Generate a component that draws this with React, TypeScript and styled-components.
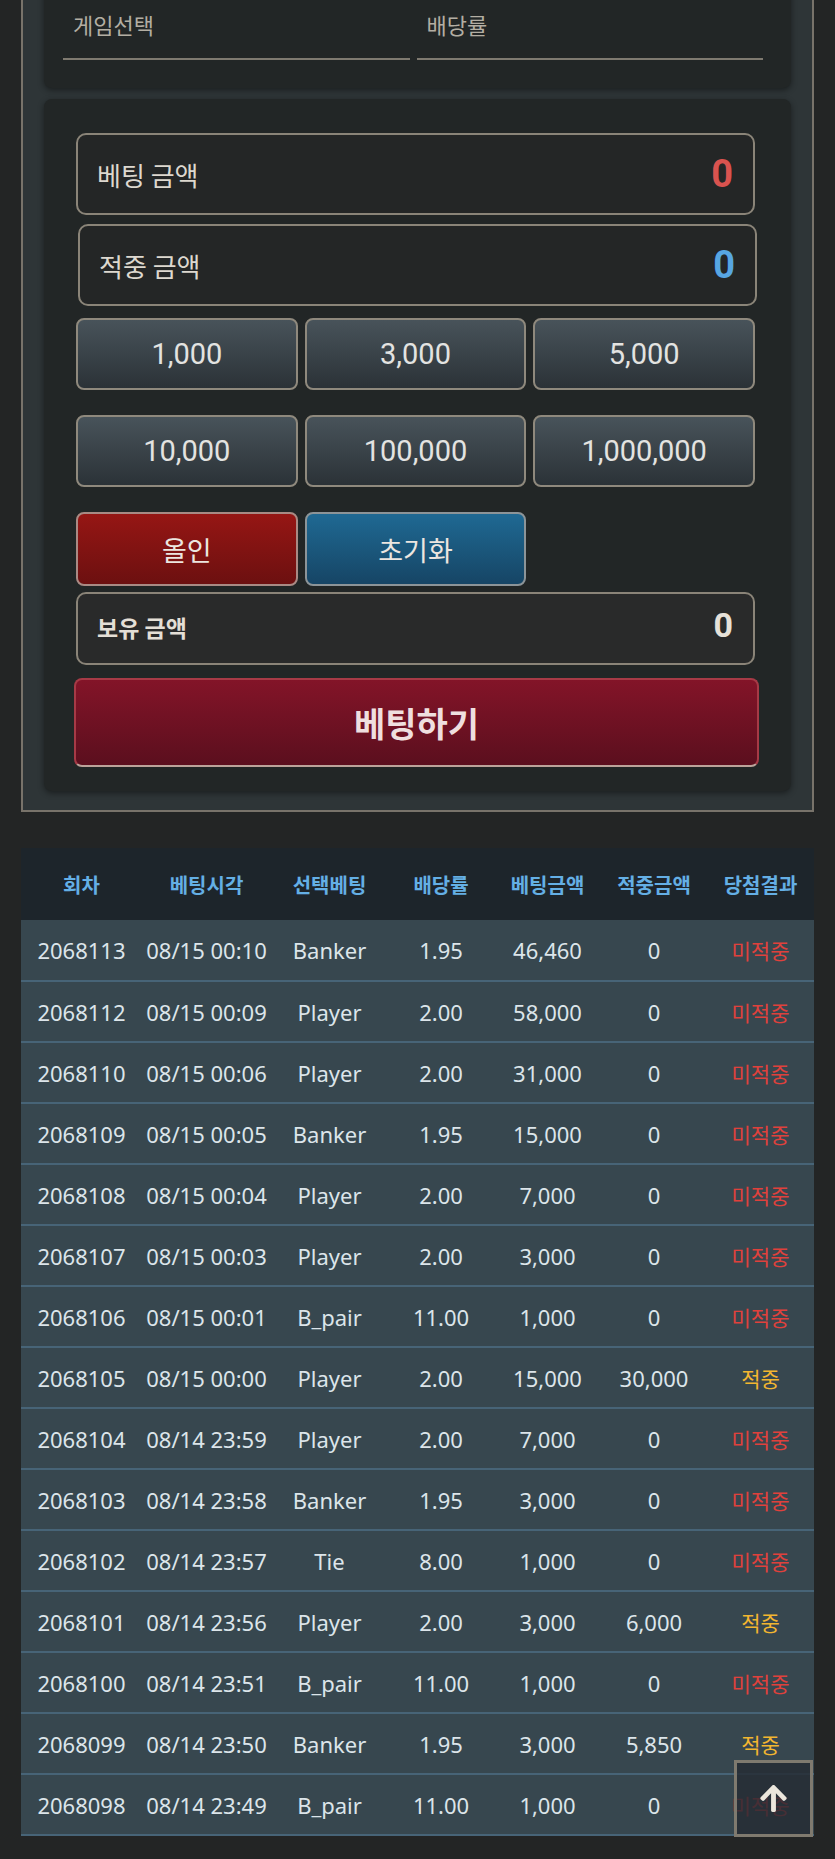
import React from "react";
import styled, { createGlobalStyle } from "styled-components";
import { FaArrowUp } from "react-icons/fa";

type Bet = {
  round: string;
  time: string;
  pick: string;
  odds: string;
  amount: string;
  win: string;
  hit: boolean;
};

const bets: Bet[] = [
  { round: "2068113", time: "08/15 00:10", pick: "Banker", odds: "1.95", amount: "46,460", win: "0", hit: false },
  { round: "2068112", time: "08/15 00:09", pick: "Player", odds: "2.00", amount: "58,000", win: "0", hit: false },
  { round: "2068110", time: "08/15 00:06", pick: "Player", odds: "2.00", amount: "31,000", win: "0", hit: false },
  { round: "2068109", time: "08/15 00:05", pick: "Banker", odds: "1.95", amount: "15,000", win: "0", hit: false },
  { round: "2068108", time: "08/15 00:04", pick: "Player", odds: "2.00", amount: "7,000", win: "0", hit: false },
  { round: "2068107", time: "08/15 00:03", pick: "Player", odds: "2.00", amount: "3,000", win: "0", hit: false },
  { round: "2068106", time: "08/15 00:01", pick: "B_pair", odds: "11.00", amount: "1,000", win: "0", hit: false },
  { round: "2068105", time: "08/15 00:00", pick: "Player", odds: "2.00", amount: "15,000", win: "30,000", hit: true },
  { round: "2068104", time: "08/14 23:59", pick: "Player", odds: "2.00", amount: "7,000", win: "0", hit: false },
  { round: "2068103", time: "08/14 23:58", pick: "Banker", odds: "1.95", amount: "3,000", win: "0", hit: false },
  { round: "2068102", time: "08/14 23:57", pick: "Tie", odds: "8.00", amount: "1,000", win: "0", hit: false },
  { round: "2068101", time: "08/14 23:56", pick: "Player", odds: "2.00", amount: "3,000", win: "6,000", hit: true },
  { round: "2068100", time: "08/14 23:51", pick: "B_pair", odds: "11.00", amount: "1,000", win: "0", hit: false },
  { round: "2068099", time: "08/14 23:50", pick: "Banker", odds: "1.95", amount: "3,000", win: "5,850", hit: true },
  { round: "2068098", time: "08/14 23:49", pick: "B_pair", odds: "11.00", amount: "1,000", win: "0", hit: false },
];

const chips = ["1,000", "3,000", "5,000", "10,000", "100,000", "1,000,000"];
const headers = ["회차", "베팅시각", "선택베팅", "배당률", "베팅금액", "적중금액", "당첨결과"];
const colWidths = [121, 129, 117, 106, 107, 106, 107];

const App = () => {
  return (
    <>
      <GlobalStyle />
      <Page>
        <Frame>
          <SelectCard>
            <Field>게임선택</Field>
            <Field>배당률</Field>
          </SelectCard>
          <BetCard>
            <AmountBox>
              <Label>베팅 금액</Label>
              <Value tone="red">0</Value>
            </AmountBox>
            <AmountBox shift>
              <Label>적중 금액</Label>
              <Value tone="blue">0</Value>
            </AmountBox>
            <ButtonGrid>
              {chips.map((c) => (
                <Chip key={c}>{c}</Chip>
              ))}
              <Action variant="allin">올인</Action>
              <Action variant="reset">초기화</Action>
            </ButtonGrid>
            <BalanceBox>
              <BalanceLabel>보유 금액</BalanceLabel>
              <BalanceValue>0</BalanceValue>
            </BalanceBox>
            <SubmitButton>베팅하기</SubmitButton>
          </BetCard>
        </Frame>

        <HistoryTable>
          <colgroup>
            {colWidths.map((w, i) => (
              <col key={i} style={{ width: w }} />
            ))}
          </colgroup>
          <thead>
            <tr>
              {headers.map((h) => (
                <Th key={h}>{h}</Th>
              ))}
            </tr>
          </thead>
          <tbody>
            {bets.map((b) => (
              <Row key={b.round}>
                <Td>{b.round}</Td>
                <Td>{b.time}</Td>
                <Td>{b.pick}</Td>
                <Td>{b.odds}</Td>
                <Td>{b.amount}</Td>
                <Td>{b.win}</Td>
                <ResultTd hit={b.hit}>{b.hit ? "적중" : "미적중"}</ResultTd>
              </Row>
            ))}
          </tbody>
        </HistoryTable>
      </Page>
      <TopButton aria-label="top">
        <FaArrowUp />
      </TopButton>
    </>
  );
};

const GlobalStyle = createGlobalStyle`
  html, body {
    margin: 0;
    padding: 0;
    background: #232525;
  }
  body {
    font-family: "Noto Sans CJK KR", "Noto Sans", sans-serif;
    overflow: hidden;
  }
  * {
    box-sizing: border-box;
  }
`;

const Page = styled.div`
  margin-top: -63px;
  padding: 0 21px 21px;
`;

const Frame = styled.div`
  display: flex;
  flex-direction: column;
  gap: 11px;
  padding: 21px 21px 19px;
  background: #2e3537;
  border: 2px solid #78736a;
`;

const Card = styled.div`
  background: #222626;
  border-radius: 8px;
  box-shadow: 0 2px 6px rgba(0, 0, 0, 0.45);
`;

const SelectCard = styled(Card)`
  display: grid;
  grid-template-columns: 1fr 1fr;
  gap: 7px;
  padding: 48px 28px 28px 19px;
`;

const Field = styled.div`
  height: 52px;
  padding: 0 10px 18px;
  display: flex;
  align-items: center;
  border-bottom: 2px solid #7f7a70;
  color: #b3aea3;
  font-size: 22px;
`;

const BetCard = styled(Card)`
  display: flex;
  flex-direction: column;
  padding: 34px 36px 24px 32px;
`;

const AmountBox = styled.div<{ shift?: boolean }>`
  display: flex;
  align-items: center;
  justify-content: space-between;
  height: 82px;
  margin-top: ${(p) => (p.shift ? "9px" : "0")};
  margin-left: ${(p) => (p.shift ? "2px" : "0")};
  margin-right: ${(p) => (p.shift ? "-2px" : "0")};
  padding: 0 20px 0 19px;
  background: #242626;
  border: 2px solid #8a8478;
  border-radius: 10px;
`;

const Label = styled.span`
  color: #ddd8cf;
  font-size: 26px;
`;

const Value = styled.span<{ tone: "red" | "blue" }>`
  font-family: Roboto, "Noto Sans", sans-serif;
  font-weight: 700;
  font-size: 38px;
  color: ${(p) => (p.tone === "red" ? "#d9534f" : "#57a6e2")};
`;

const ButtonGrid = styled.div`
  display: grid;
  grid-template-columns: repeat(3, 1fr);
  column-gap: 7px;
  row-gap: 25px;
  margin-top: 12px;
`;

const Chip = styled.button`
  height: 72px;
  border: 2px solid #8f897d;
  border-radius: 8px;
  background: linear-gradient(#48535a, #2b3237);
  color: #e3e3e1;
  font-family: Roboto, "Noto Sans", sans-serif;
  font-size: 29px;
  cursor: pointer;
`;

const Action = styled.button<{ variant: "allin" | "reset" }>`
  height: 74px;
  border: 2px solid ${(p) => (p.variant === "allin" ? "#a98a84" : "#8c9498")};
  border-radius: 8px;
  background: ${(p) =>
    p.variant === "allin"
      ? "linear-gradient(#961614, #6c1010)"
      : "linear-gradient(#1f6993, #164565)"};
  color: #ece6e0;
  font-family: "Noto Sans CJK KR", sans-serif;
  font-size: 27px;
  cursor: pointer;
`;

const BalanceBox = styled.div`
  display: flex;
  align-items: center;
  justify-content: space-between;
  height: 73px;
  margin-top: 6px;
  padding: 0 20px 0 19px;
  background: #292a2a;
  border: 2px solid #8a8478;
  border-radius: 10px;
`;

const BalanceLabel = styled.span`
  color: #e4dfd6;
  font-size: 23px;
  font-weight: 700;
  margin-top: -3px;
`;

const BalanceValue = styled.span`
  color: #e6e1d8;
  font-family: Roboto, "Noto Sans", sans-serif;
  font-size: 34px;
  font-weight: 700;
  margin-top: -8px;
`;

const SubmitButton = styled.button`
  height: 89px;
  margin: 13px -4px 0 -2px;
  border: 2px solid #a63a46;
  border-bottom-color: #bca39a;
  border-radius: 8px;
  background: linear-gradient(#831428, #5b0f1e);
  color: #efdfdf;
  font-family: "Noto Sans CJK KR", sans-serif;
  font-size: 34px;
  font-weight: 700;
  cursor: pointer;
`;

const HistoryTable = styled.table`
  width: 793px;
  margin-top: 36px;
  border-collapse: collapse;
  table-layout: fixed;
  font-family: "Noto Sans", "Noto Sans CJK KR", sans-serif;
`;

const Th = styled.th`
  height: 72px;
  padding: 0;
  background: #1d252b;
  color: #64afe5;
  font-family: "Noto Sans CJK KR", sans-serif;
  font-size: 20px;
  font-weight: 700;
  text-align: center;
  white-space: nowrap;
`;

const Row = styled.tr`
  height: 61px;
  background: #37474f;
  border-bottom: 2px solid #476477;
`;

const Td = styled.td`
  padding: 0;
  color: #dce5ea;
  font-size: 22px;
  text-align: center;
  white-space: nowrap;
`;

const ResultTd = styled(Td)<{ hit: boolean }>`
  font-family: "Noto Sans CJK KR", sans-serif;
  font-size: 21px;
  color: ${(p) => (p.hit ? "#f3b630" : "#e0413c")};
`;

const TopButton = styled.button`
  position: fixed;
  right: 22px;
  bottom: 22px;
  width: 79px;
  height: 77px;
  display: flex;
  align-items: center;
  justify-content: center;
  padding: 0;
  background: rgba(36, 43, 51, 0.82);
  border: 3px solid #7f7a6f;
  color: #ebe6dc;
  font-size: 31px;
  cursor: pointer;
`;

export default App;
